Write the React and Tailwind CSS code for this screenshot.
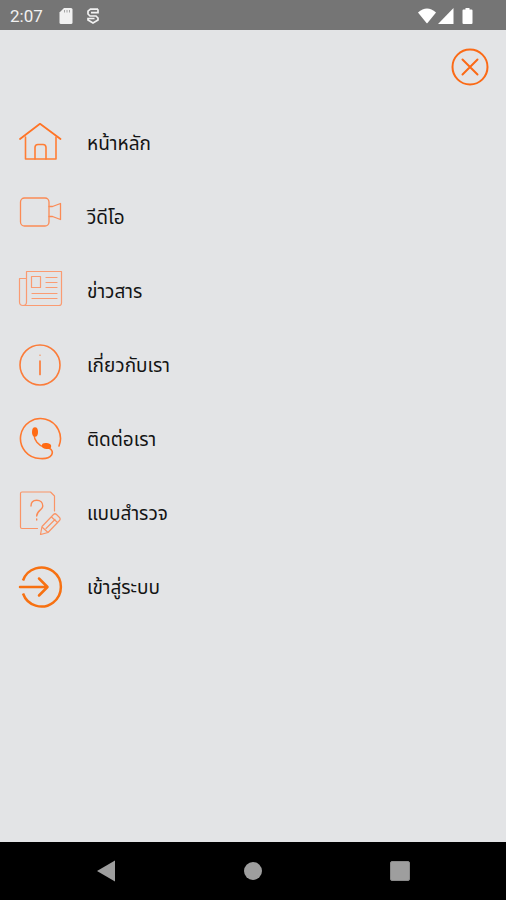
import React from "react";

const HomeIcon = () => (
  <>
    <path d="M2 18 L22 2.8 L42.5 18" stroke="#ff7426" strokeWidth="1.8" />
    <path d="M7.5 16 V38 H38 V16" stroke="#ff7d35" strokeWidth="1.6" />
    <path d="M17 38 V26.5 Q17 23.5 20 23.5 H25 Q28 23.5 28 26.5 V38" stroke="#ff7d35" strokeWidth="1.6" />
  </>
);

const VideoIcon = () => (
  <g stroke="#fb8a55" strokeWidth="1.3">
    <rect x="2.5" y="3" width="28.5" height="28" rx="4" />
    <path d="M31 11.5 H34.5 L42.5 8.5 V24.5 L34.5 21.5 H31" />
  </g>
);

const NewsIcon = () => (
  <g stroke="#fa9b72" strokeWidth="1.2">
    <path d="M8.5 9.5 V2.5 H43.5 V34 Q43.5 36.5 41 36.5 H5 Q1.5 36.5 1.5 33 V9.5 H8.5 V33 Q8.5 36.5 5 36.5" />
    <rect x="13.5" y="7.5" width="9" height="11" />
    <path d="M28 8.5 H39 M28 13.5 H39 M28 18.5 H39 M14 24.5 H39 M14 29.5 H39" />
  </g>
);

const InfoIcon = () => (
  <g stroke="#fb7c3a">
    <circle cx="22" cy="22" r="20" strokeWidth="1.6" />
    <path d="M22 18 V31.5" strokeWidth="1.7" />
    <path d="M22 12 V12.5" strokeWidth="1" />
  </g>
);

const PhoneIcon = () => (
  <>
    <path
      d="M41 29 A20 20 0 1 0 22 41.5 C28 42 31.5 41 33.5 38 C35 35.5 34.5 33 31 31"
      stroke="#ff7930"
      strokeWidth="1.6"
    />
    <path d="M16 17 C16 23 20 28.5 27 30.5" stroke="#ff7930" strokeWidth="1.4" />
    <ellipse cx="17" cy="15" rx="3" ry="4.7" fill="#ff6a13" />
    <ellipse cx="28.5" cy="29" rx="4.7" ry="3" fill="#ff6a13" transform="rotate(8 28.5 29)" />
  </>
);

const SurveyIcon = () => (
  <>
    <g stroke="#fa9466" strokeWidth="1.2">
      <path d="M19.5 37.5 H4 Q2.5 37.5 2.5 36 V2.5 Q2.5 1 4 1 H32.5 L36.5 5 V20" />
      <path d="M22.5 43.5 L24 35.5 L35.5 23.5 Q37 22 38.5 23.5 L41.5 26.5 Q42.8 28 41.5 29.5 L30 41.5 Z" />
      <path d="M24.5 36.5 L29.5 41 M28 37.5 L37 28.5 M33.5 26 L39.5 31.5" />
    </g>
    <path d="M13 15 C13 11 15.5 9.2 18.7 9.2 C22.2 9.2 24.8 11.5 24.8 15 C24.8 19 18.7 19.5 18.7 25 M18.7 28 V29" stroke="#fb8a55" strokeWidth="1.4" />
  </>
);

const LoginIcon = () => (
  <g stroke="#f77112" strokeWidth="2.5">
    <path d="M5 15.5 A19.5 19.5 0 1 1 5 28.5" strokeLinecap="butt" />
    <path d="M2 22 H29 M21 13.5 L29.5 22 L21 30.5" />
  </g>
);

const menuItems = [
  { title: "หน้าหลัก", Icon: HomeIcon },
  { title: "วีดีโอ", Icon: VideoIcon },
  { title: "ข่าวสาร", Icon: NewsIcon },
  { title: "เกี่ยวกับเรา", Icon: InfoIcon },
  { title: "ติดต่อเรา", Icon: PhoneIcon },
  { title: "แบบสำรวจ", Icon: SurveyIcon },
  { title: "เข้าสู่ระบบ", Icon: LoginIcon },
];

const StatusBar = () => (
  <div className="flex h-[30px] items-center justify-between bg-[#757575] pl-[10px] pr-8 pt-px text-[#f1f1f1]">
    <div className="flex items-center">
      <span className="font-[Roboto,sans-serif] text-[17px] leading-5">2:07</span>
      <svg className="ml-4 h-4 w-[14px]" viewBox="0 0 14 16" fill="currentColor">
        <path d="M5 0 H12 Q13.5 0 13.5 1.5 V14.5 Q13.5 16 12 16 H2 Q.5 16 .5 14.5 V4.5 Z" />
        <path d="M5.5 2 V4.5 M8 2 V4.5 M10.5 2 V4.5" stroke="#a5a5a5" />
      </svg>
      <svg className="ml-3 h-4 w-4" viewBox="0 0 16 16" fill="none" stroke="currentColor" strokeWidth="1.7">
        <path d="M13 1.2 H5.5 L3 3.2 V6 L5 8 H11 L13 10 V12 L8 15 L3 12 V10.5 H9.5" />
        <path d="M6 4.6 H13 V1.2" />
      </svg>
    </div>
    <div className="flex items-center gap-[2px]">
      <svg className="h-4 w-[18px]" viewBox="0 0 18 16" fill="#fff">
        <path d="M0 4.5 Q9 -3.5 18 4.5 L9.5 15 Q9 15.6 8.5 15 Z" />
      </svg>
      <svg className="h-4 w-4" viewBox="0 0 16 16" fill="#fff">
        <path d="M15.5 0 V16 H0 Z" />
      </svg>
      <svg className="ml-[6px] h-4 w-3" viewBox="0 0 12 16" fill="#fff">
        <path d="M3.5 0 H7.5 V1.5 H9.5 Q10.5 1.5 10.5 2.5 V15 Q10.5 16 9.5 16 H1.5 Q.5 16 .5 15 V2.5 Q.5 1.5 1.5 1.5 H3.5 Z" />
      </svg>
    </div>
  </div>
);

const MenuItem = ({ title, Icon }) => (
  <li>
    <a href="#" className="flex h-[74px] items-center gap-6 pl-[18px] text-[#141414]">
      <svg
        className="h-11 w-[45px] shrink-0"
        viewBox="0 0 45 44"
        fill="none"
        strokeLinecap="round"
        strokeLinejoin="round"
      >
        <Icon />
      </svg>
      <span className="pt-1 text-[19px] leading-7">{title}</span>
    </a>
  </li>
);

const NavBar = () => (
  <nav className="flex h-[58px] items-center bg-black px-[33px] text-[#9e9e9e]">
    <button type="button" aria-label="Back" className="flex flex-1 justify-center">
      <svg className="h-[22px] w-5" viewBox="0 0 20 22" fill="currentColor">
        <path d="M1 11 L19 .5 V21.5 Z" />
      </svg>
    </button>
    <button type="button" aria-label="Home" className="flex flex-1 justify-center">
      <span className="size-[18px] rounded-full bg-current" />
    </button>
    <button type="button" aria-label="Recent apps" className="flex flex-1 justify-center">
      <span className="size-5 rounded-[2px] border border-[#8a8a8a] bg-[#9e9e9e]" />
    </button>
  </nav>
);

const App = () => {
  return (
    <div className="flex min-h-screen flex-col bg-[#e3e4e6] font-['Noto_Sans_Thai','Noto_Sans',sans-serif]">
      <StatusBar />

      <header className="flex justify-end px-[17px] pb-5 pt-[18px]">
        <button type="button" aria-label="Close">
          <svg
            className="size-[38px]"
            viewBox="0 0 38 38"
            fill="none"
            stroke="#fb6a16"
            strokeWidth="2"
            strokeLinecap="round"
          >
            <circle cx="19" cy="19" r="17.5" />
            <path d="M11.5 11.5 L26.5 26.5 M26.5 11.5 L11.5 26.5" />
          </svg>
        </button>
      </header>

      <ul className="flex-1">
        {menuItems.map((item) => (
          <MenuItem key={item.title} {...item} />
        ))}
      </ul>

      <NavBar />
    </div>
  );
};

export default App;
